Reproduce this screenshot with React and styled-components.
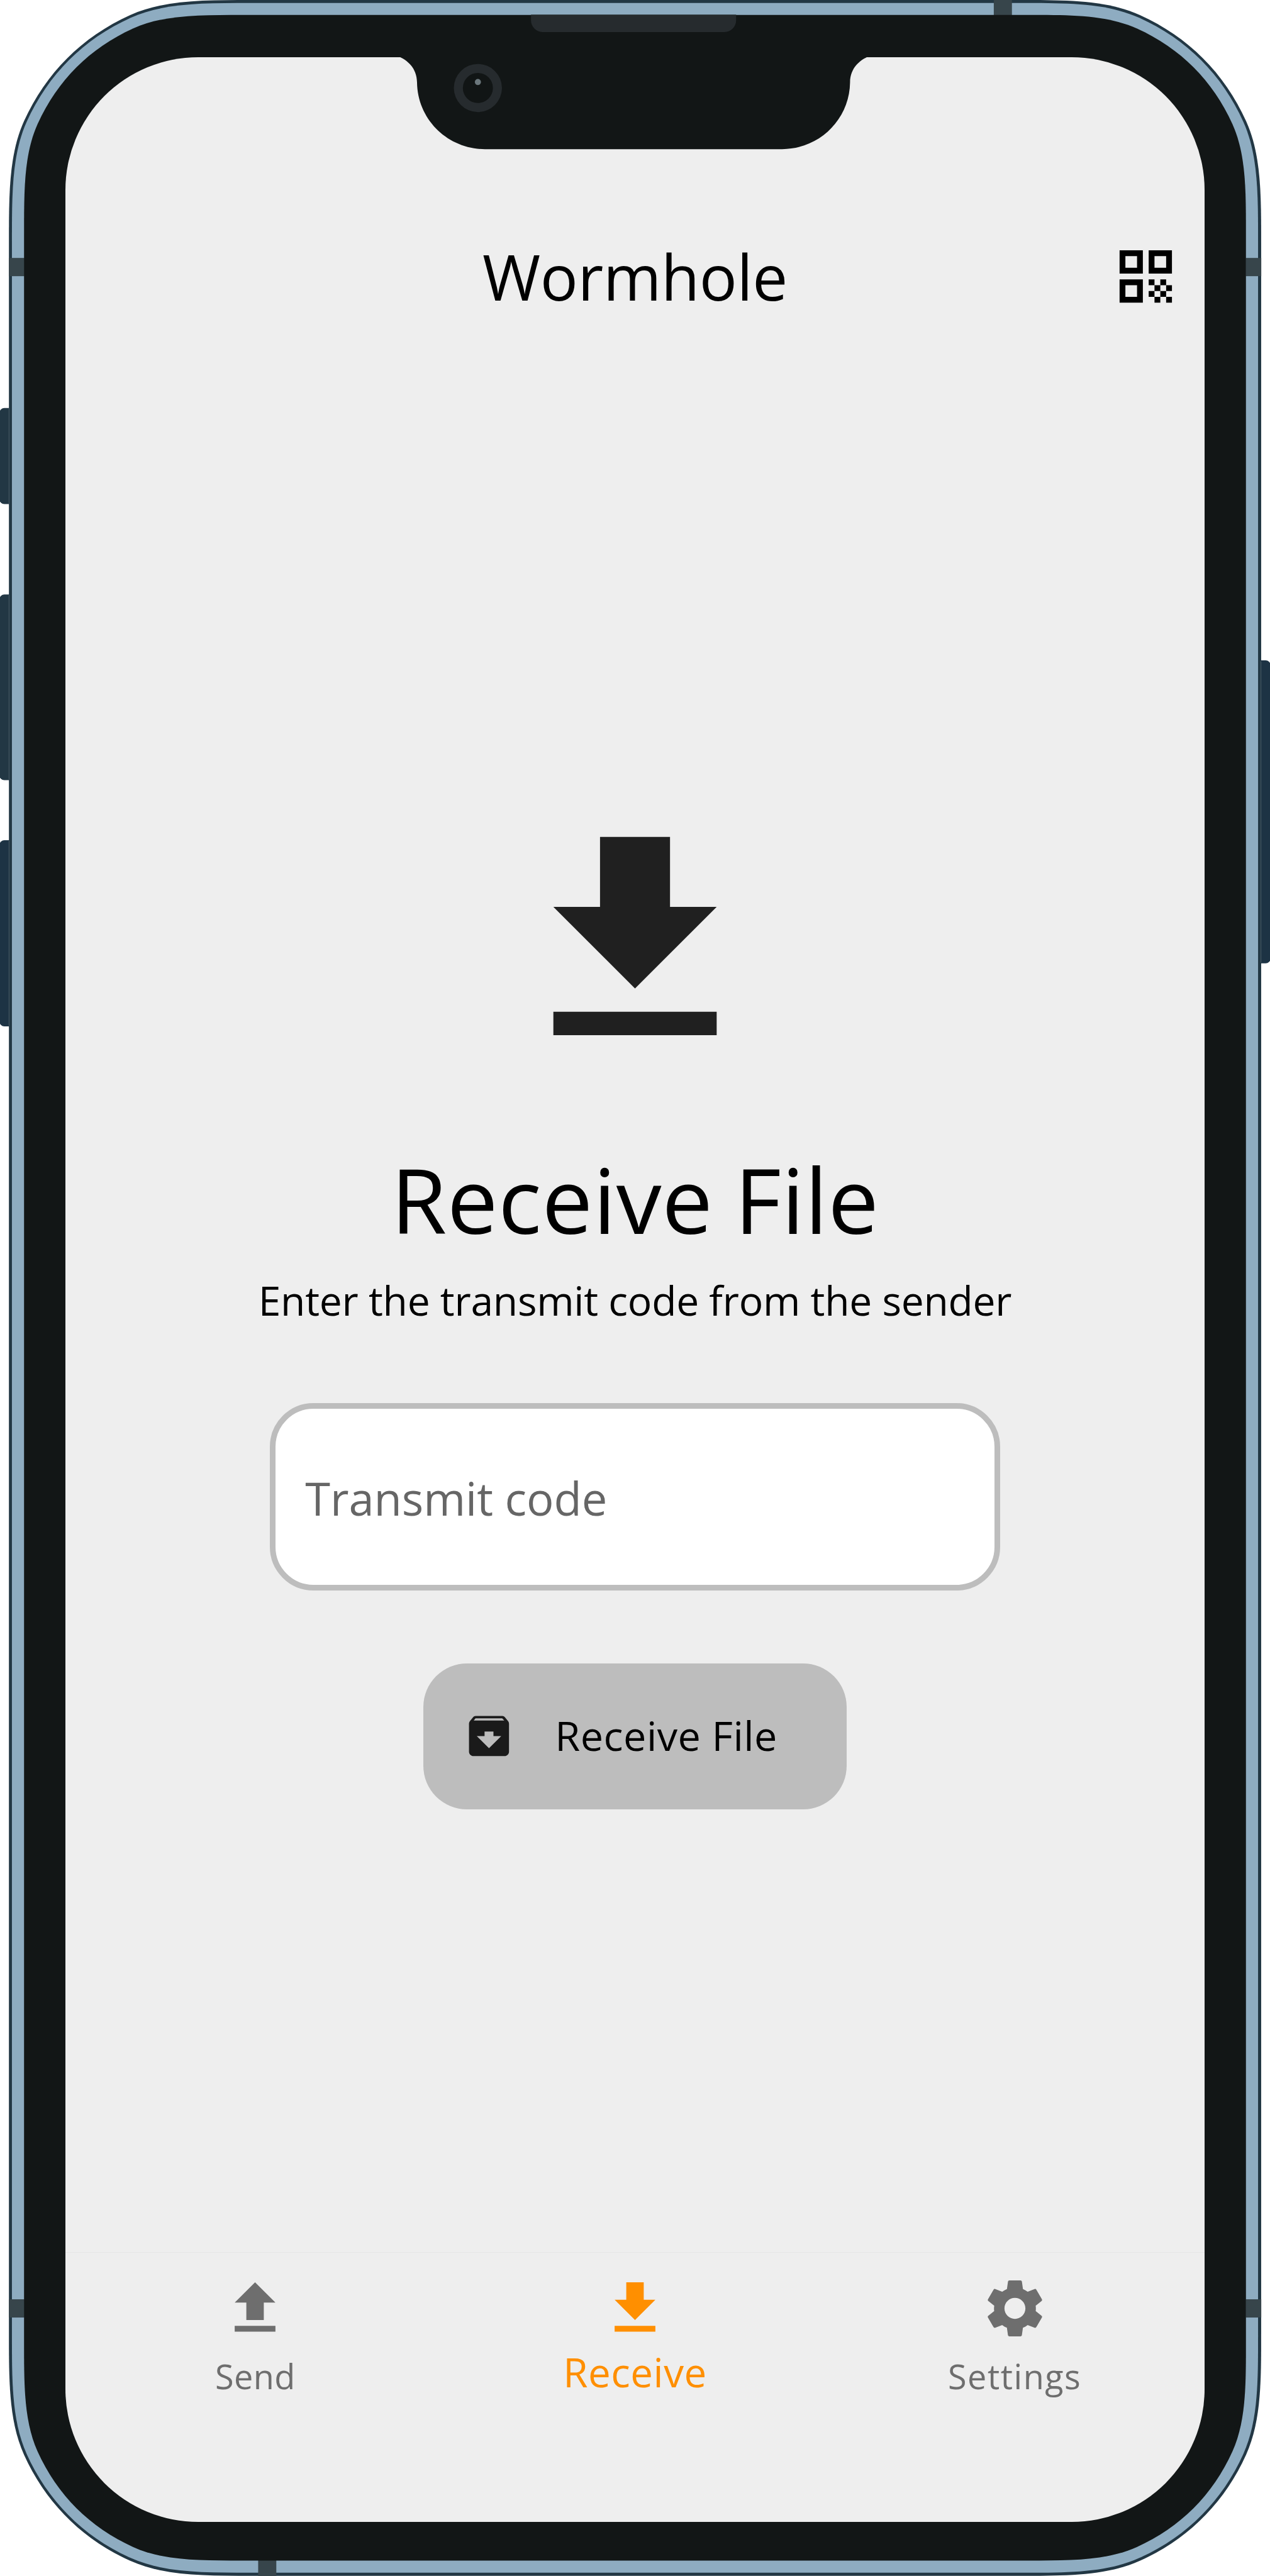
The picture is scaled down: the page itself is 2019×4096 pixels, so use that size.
import React from "react";
import styled, { createGlobalStyle } from "styled-components";

// Artboard units to window pixels.
const SCALE = 0.77094;
const u = (n) => `${(n * SCALE).toFixed(3)}px`;

const color = {
  screen: "#eeeeee",
  bezel: "#121616",
  rim: "#223744",
  frame: "#8eacc1",
  band: "#37454b",
  detail: "#262b2e",
  grey: "#bdbdbd",
  muted: "#6e6e6e",
  hint: "#666666",
  accent: "#ff8f00",
};

const GlobalStyle = createGlobalStyle`
  *, *::before, *::after { box-sizing: border-box; }
  html, body { margin: 0; padding: 0; background: #fff; }
  body { overflow: hidden; }
  button, input { font: inherit; color: inherit; margin: 0; }
`;

const Device = styled.div`
  position: relative;
  width: 2019px;
  height: 4096px;
  padding: ${u(118)} ${u(135)} ${u(112)};
  overflow: hidden;
  font-family: "Open Sans", "Noto Sans", sans-serif;
  color: #000;
`;

const DeviceArt = styled.svg`
  position: absolute;
  inset: 0;
  width: 100%;
  height: 100%;
  pointer-events: none;
`;

const Screen = styled.div`
  position: relative;
  display: flex;
  flex-direction: column;
  width: ${u(2349)};
  height: ${u(5083)};
  border-radius: ${u(274)};
  background: ${color.screen};
  overflow: hidden;
`;

const Header = styled.header`
  display: grid;
  grid-template-columns: 1fr auto 1fr;
  align-items: center;
  padding: ${u(379.6)} ${u(49)} 0;
`;

const Title = styled.h1`
  grid-column: 2;
  margin: 0;
  padding-bottom: ${u(1)};
  font-size: ${u(129.5)};
  line-height: ${u(138)};
  font-weight: 400;
  letter-spacing: ${u(-0.5)};
`;

const IconButton = styled.button`
  justify-self: end;
  display: flex;
  padding: 0;
  border: 0;
  background: none;
`;

const Icon = styled.svg`
  display: block;
  flex: none;
  width: ${(p) => u(p.$size)};
  height: ${(p) => u(p.$size)};
  fill: currentColor;
  color: ${(p) => p.$color || "inherit"};
`;

const Main = styled.main`
  flex: 1;
  display: flex;
  flex-direction: column;
  align-items: center;
  padding-top: ${u(1012.5)};
`;

const Heading = styled.h2`
  margin: ${u(117)} 0 0;
  font-size: ${u(186.5)};
  line-height: ${u(250)};
  font-weight: 400;
  letter-spacing: ${u(0.8)};
  word-spacing: ${u(-5)};
`;

const Subtitle = styled.p`
  margin: ${u(28.8)} 0 0;
  font-size: ${u(83.2)};
  line-height: ${u(110)};
  letter-spacing: ${u(-0.31)};
  white-space: nowrap;
`;

const CodeInput = styled.input`
  width: ${u(1504.8)};
  height: ${u(385.8)};
  margin-top: ${u(156.9)};
  padding: ${u(6)} ${u(60.6)} 0;
  border: ${u(12)} solid ${color.grey};
  border-radius: ${u(90)};
  background: #fff;
  font-size: ${u(93.8)};
  letter-spacing: ${u(-0.1)};
  outline: none;

  &::placeholder {
    color: ${color.hint};
    opacity: 1;
  }
`;

const ReceiveButton = styled.button`
  display: flex;
  align-items: center;
  gap: ${u(81)};
  width: ${u(873.5)};
  height: ${u(300.4)};
  margin-top: ${u(151.1)};
  padding: 0 ${u(80.8)};
  border: 0;
  border-radius: ${u(90)};
  background: ${color.grey};
  font-size: ${u(84)};
  letter-spacing: ${u(0.6)};
  white-space: nowrap;
`;

const ButtonLabel = styled.span`
  padding-bottom: ${u(2)};
  line-height: ${u(114)};
`;

const NavBar = styled.nav`
  display: grid;
  grid-template-columns: repeat(3, 1fr);
  height: ${u(556.5)};
  border-top: 1px solid #e6e6e6;
`;

const Tab = styled.a`
  display: flex;
  flex-direction: column;
  align-items: center;
  gap: ${(p) => u(p.$active ? 9 : 17.8)};
  padding-top: ${u(43.2)};
  color: ${(p) => (p.$active ? color.accent : color.muted)};
`;

const TabLabel = styled.span`
  font-size: ${(p) => u(p.$active ? 82.6 : 70)};
  line-height: ${u(100)};
  letter-spacing: ${(p) => u(p.$tracking)};
`;

const paths = {
  download: "M19 9h-4V3H9v6H5l7 7 7-7zM5 18v2h14v-2H5z",
  upload: "M9 16h6v-6h4l-7-7-7 7h4zM5 18h14v2H5z",
  archive:
    "M20.54 5.23l-1.39-1.68C18.88 3.21 18.47 3 18 3H6c-.47 0-.88.21-1.16.55L3.46 5.23C3.17 5.57 3 6.02 3 6.5V19c0 1.1.9 2 2 2h14c1.1 0 2-.9 2-2V6.5c0-.48-.17-.93-.46-1.27zM12 17.5L6.5 12H10v-2h4v2h3.5L12 17.5zM5.12 5l.81-1h12l.94 1H5.12z",
  qr:
    "M3 3h8v8H3zM5 5v4h4V5zM13 3h8v8h-8zM15 5v4h4V5zM3 13h8v8H3zM5 15v4h4v-4zM13 13h2v2h-2zM17 13h2v2h-2zM15 15h2v2h-2zM19 15h2v2h-2zM13 17h2v2h-2zM17 17h2v2h-2zM15 19h2v2h-2zM19 19h2v2h-2z",
  settings:
    "M19.14 12.94c.04-.3.06-.61.06-.94 0-.32-.02-.64-.07-.94l2.03-1.58c.18-.14.23-.41.12-.61l-1.92-3.32c-.12-.22-.37-.29-.59-.22l-2.39.96c-.5-.38-1.03-.7-1.62-.94l-.36-2.54c-.04-.24-.24-.41-.48-.41h-3.84c-.24 0-.43.17-.47.41l-.36 2.54c-.59.24-1.13.57-1.62.94l-2.39-.96c-.22-.08-.47 0-.59.22L2.74 8.87c-.12.21-.08.47.12.61l2.03 1.58c-.05.3-.09.63-.09.94s.02.64.07.94l-2.03 1.58c-.18.14-.23.41-.12.61l1.92 3.32c.12.22.37.29.59.22l2.39-.96c.5.38 1.03.7 1.62.94l.36 2.54c.05.24.24.41.48.41h3.84c.24 0 .44-.17.47-.41l.36-2.54c.59-.24 1.13-.56 1.62-.94l2.39.96c.22.08.47 0 .59-.22l1.92-3.32c.12-.22.07-.47-.12-.61l-2.01-1.58zM12 15.6c-1.98 0-3.6-1.62-3.6-3.6s1.62-3.6 3.6-3.6 3.6 1.62 3.6 3.6-1.62 3.6-3.6 3.6z",
};

function Glyph({ name, size, color: tint }) {
  return (
    <Icon viewBox="0 0 24 24" $size={size} $color={tint} aria-hidden="true">
      <path d={paths[name]} fillRule="evenodd" />
    </Icon>
  );
}

// Continuous-curvature rounded rectangle; k scales the corner.
function squircle(l, t, r, b, k) {
  const c = [500, 400, 319, 250, 150.5, 31, 76].map((n) => n * k);
  const [s, a, d, e, f, g, h] = c;
  return [
    `M${l + s} ${t}H${r - s}`,
    `C${r - a} ${t} ${r - d} ${t} ${r - e} ${t + g}`,
    `C${r - f} ${t + h} ${r - h} ${t + f} ${r - g} ${t + e}`,
    `C${r} ${t + d} ${r} ${t + a} ${r} ${t + s}V${b - s}`,
    `C${r} ${b - a} ${r} ${b - d} ${r - g} ${b - e}`,
    `C${r - h} ${b - f} ${r - f} ${b - h} ${r - e} ${b - g}`,
    `C${r - d} ${b} ${r - a} ${b} ${r - s} ${b}H${l + s}`,
    `C${l + a} ${b} ${l + d} ${b} ${l + e} ${b - g}`,
    `C${l + f} ${b - h} ${l + h} ${b - f} ${l + g} ${b - e}`,
    `C${l} ${b - d} ${l} ${b - a} ${l} ${b - s}V${t + s}`,
    `C${l} ${t + a} ${l} ${t + d} ${l + g} ${t + e}`,
    `C${l + h} ${t + f} ${l + f} ${t + h} ${l + e} ${t + g}`,
    `C${l + d} ${t} ${l + a} ${t} ${l + s} ${t}Z`,
  ].join("");
}

function Body() {
  return (
    <DeviceArt viewBox="0 0 2619 5313" preserveAspectRatio="none" aria-hidden="true">
      <g fill={color.rim}>
        <rect x="-1" y="841.6" width="40" height="198" rx="10" />
        <rect x="-1" y="1226" width="40" height="383" rx="10" />
        <rect x="-1" y="1733" width="40" height="384" rx="10" fill="#1d3344" />
        <rect x="2580" y="1362" width="40" height="625" rx="10" fill="#1d3344" />
      </g>
      <path d={squircle(18.4, 0, 2600.8, 5312.6, 1)} fill={color.rim} />
      <path d={squircle(24.6, 6.3, 2594.4, 5306.2, 0.98)} fill={color.frame} />
      <g fill={color.band}>
        <rect x="18.4" y="532" width="32" height="37.6" />
        <rect x="2569" y="532" width="32" height="37.6" />
        <rect x="18.4" y="4742.3" width="32" height="37.6" />
        <rect x="2569" y="4742.3" width="32" height="37.6" />
        <rect x="2049.4" y="0" width="37.4" height="32" />
        <rect x="532.4" y="5280" width="37.4" height="33" />
      </g>
      <path d={squircle(49.6, 30.8, 2569.4, 5281.2, 0.9)} fill={color.bezel} />
      <g fill="#566870">
        <rect x="18" y="842" width="1" height="197" />
        <rect x="18" y="1227" width="1" height="381" />
        <rect x="18" y="1734" width="1" height="382" />
        <rect x="2600" y="1364" width="1" height="621" />
      </g>
    </DeviceArt>
  );
}

function Notch() {
  return (
    <DeviceArt viewBox="0 0 2619 5313" preserveAspectRatio="none" aria-hidden="true">
      <path
        fill={color.bezel}
        d="M825.5 117V118C838 124 860 139 860 170C861 247 924 307.6 1000 307.6H1613C1689 307.6 1752 247 1753 170C1753 139 1775 124 1787.5 118V117Z"
      />
      <path
        fill={color.detail}
        d="M1095 30H1518V42C1518 55 1507 66 1494 66H1119C1106 66 1095 55 1095 42Z"
      />
      <circle cx="985.5" cy="181.5" r="49.6" fill={color.detail} />
      <circle cx="985.5" cy="181.5" r="31" fill="#111515" />
      <circle cx="985.5" cy="169.2" r="6.3" fill="#6b777c" />
    </DeviceArt>
  );
}

const tabs = [
  { label: "Send", icon: "upload", tracking: 0.6 },
  { label: "Receive", icon: "download", tracking: 0.68, active: true },
  { label: "Settings", icon: "settings", tracking: 2 },
];

export default function App() {
  return (
    <>
      <GlobalStyle />
      <Device>
        <Body />
        <Screen>
          <Header>
            <Title>Wormhole</Title>
            <IconButton aria-label="Scan QR code">
              <Glyph name="qr" size={144} color="#000" />
            </IconButton>
          </Header>
          <Main>
            <Glyph name="download" size={577.3} color="#202020" />
            <Heading>Receive File</Heading>
            <Subtitle>Enter the transmit code from the sender</Subtitle>
            <CodeInput placeholder="Transmit code" />
            <ReceiveButton>
              <Glyph name="archive" size={110} color="#1a1a1a" />
              <ButtonLabel>Receive File</ButtonLabel>
            </ReceiveButton>
          </Main>
          <NavBar>
            {tabs.map((t) => (
              <Tab key={t.label} $active={t.active}>
                <Glyph name={t.icon} size={144} />
                <TabLabel $active={t.active} $tracking={t.tracking}>
                  {t.label}
                </TabLabel>
              </Tab>
            ))}
          </NavBar>
        </Screen>
        <Notch />
      </Device>
    </>
  );
}
